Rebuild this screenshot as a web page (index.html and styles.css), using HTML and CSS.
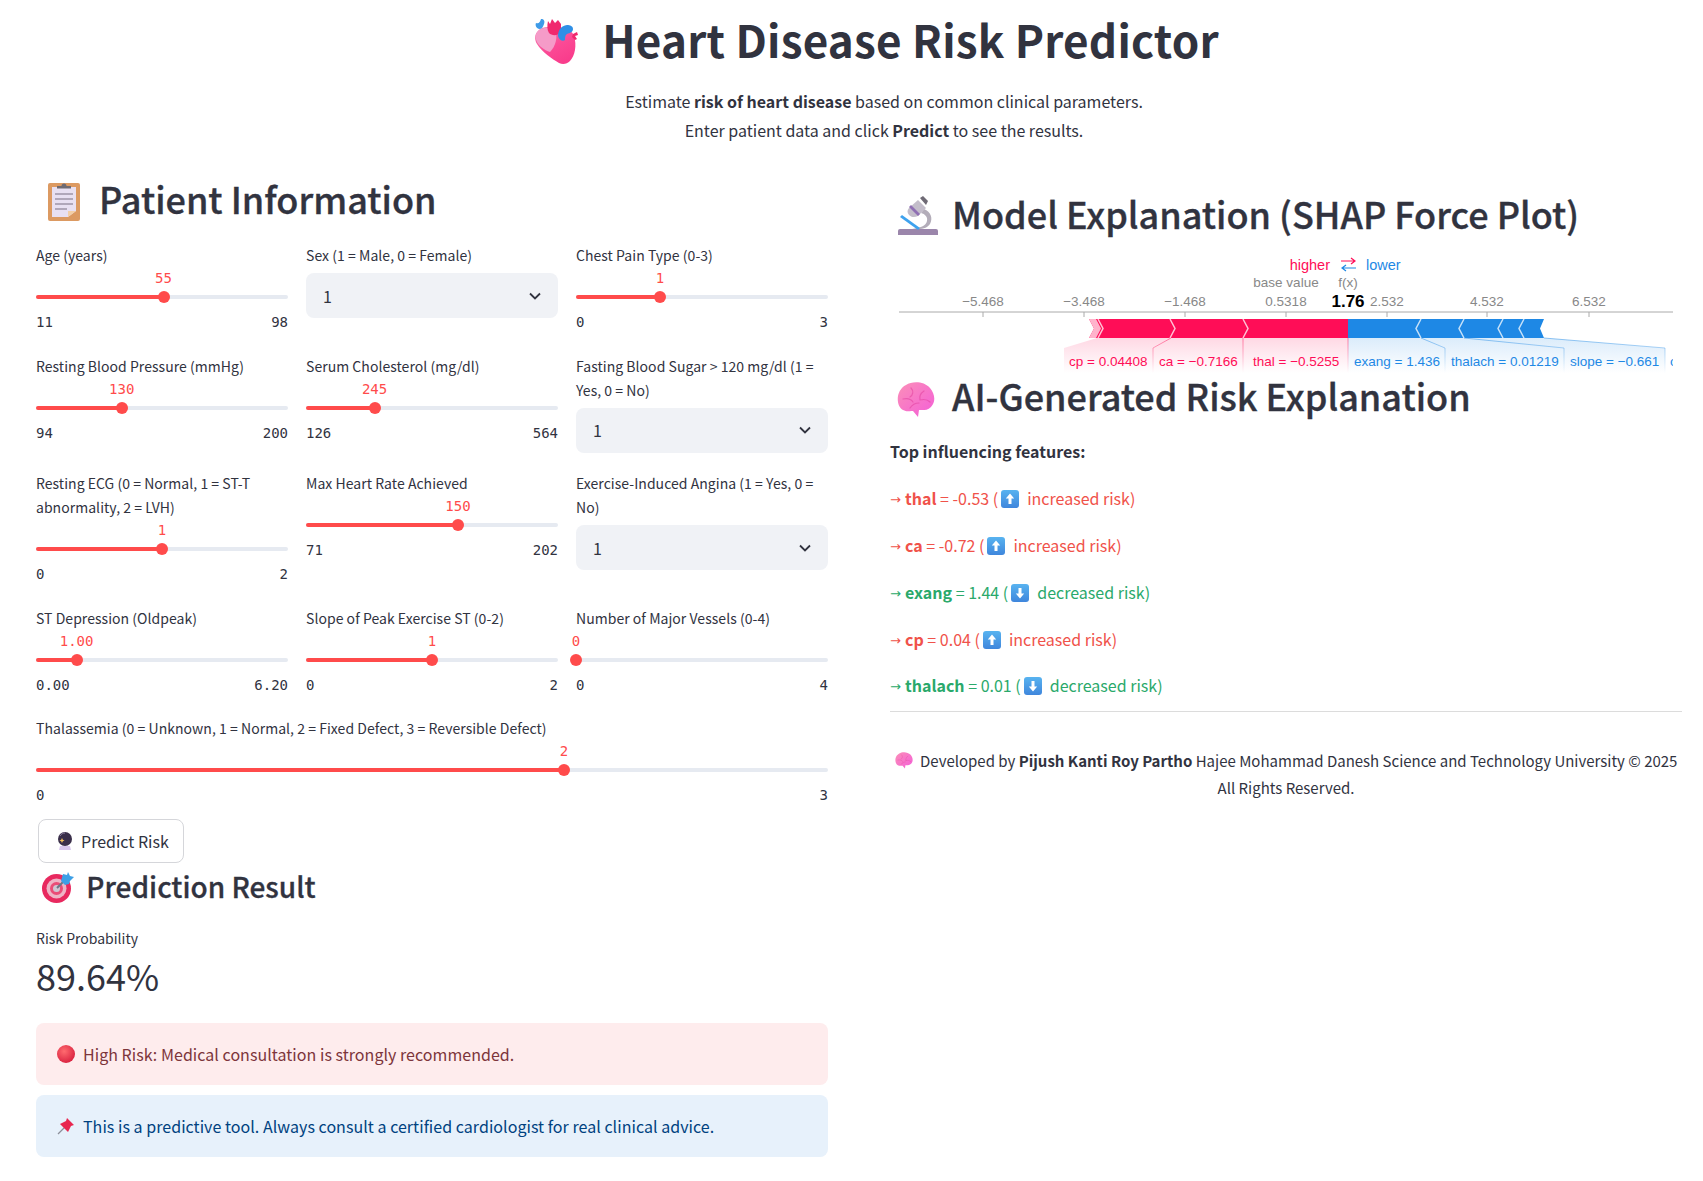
FILE: index.html
```html
<!DOCTYPE html>
<html lang="en">
<head>
    <meta charset="UTF-8">
    <meta name="viewport" content="width=device-width, initial-scale=1.0">
    <title>Heart Disease Risk Predictor</title>
    <link rel="stylesheet" href="styles.css">
</head>
<body>
    <!-- Emoji drawings, reused below -->
    <svg class="defs" width="0" height="0" aria-hidden="true">
        <defs>
            <linearGradient id="heartFill" x1="0" y1="0" x2="0.6" y2="1"><stop offset="0" stop-color="#f27bb0"/><stop offset="0.6" stop-color="#fb4a95"/><stop offset="1" stop-color="#f93d8c"/></linearGradient>
            <linearGradient id="brainFill" x1="0" y1="0" x2="1" y2="1"><stop offset="0" stop-color="#fb8fb8"/><stop offset="1" stop-color="#f45ed8"/></linearGradient>
            <radialGradient id="redBall" cx="0.4" cy="0.35" r="0.7"><stop offset="0" stop-color="#ff6b6f"/><stop offset="1" stop-color="#d81f3e"/></radialGradient>
            <linearGradient id="keyFill" x1="0" y1="0" x2="0" y2="1"><stop offset="0" stop-color="#58b3f0"/><stop offset="1" stop-color="#3f86dc"/></linearGradient>
            <linearGradient id="pinkFade" gradientUnits="userSpaceOnUse" x1="0" y1="338" x2="0" y2="373"><stop offset="0" stop-color="#ff0d57" stop-opacity="0.16"/><stop offset="1" stop-color="#ff0d57" stop-opacity="0"/></linearGradient>
            <linearGradient id="blueFade" gradientUnits="userSpaceOnUse" x1="0" y1="338" x2="0" y2="373"><stop offset="0" stop-color="#1e88e5" stop-opacity="0.16"/><stop offset="1" stop-color="#1e88e5" stop-opacity="0"/></linearGradient>
            <linearGradient id="pinkLine" gradientUnits="userSpaceOnUse" x1="0" y1="338" x2="0" y2="373"><stop offset="0" stop-color="#ff0d57" stop-opacity="0.5"/><stop offset="1" stop-color="#ff0d57" stop-opacity="0"/></linearGradient>
            <linearGradient id="blueLine" gradientUnits="userSpaceOnUse" x1="0" y1="338" x2="0" y2="373"><stop offset="0" stop-color="#1e88e5" stop-opacity="0.5"/><stop offset="1" stop-color="#1e88e5" stop-opacity="0"/></linearGradient>
            <clipPath id="plotClip"><rect x="899" y="251" width="774" height="122"/></clipPath>
        </defs>
        <symbol id="iconBrain" viewBox="0 0 38 36">
            <path d="M9 3C15-1 27-1 33 6c5 6 6 14 1 19-3 3-6 3-9 3l-3 0-1 7-5-6c-5 0-6 1-10-1C2 26 0 20 1 14 2 9 5 5 9 3z" fill="url(#brainFill)"/>
            <path d="M14 6c3 3 2 7-1 9M27 9c-3 2-5 5-4 9M6 17c4-1 8 0 10 3M23 18c4-1 8 0 10 2M13 26c2-3 5-5 9-5" fill="none" stroke="#e2409f" stroke-opacity="0.55" stroke-width="1.2" stroke-linecap="round"/>
        </symbol>
        <symbol id="iconUp" viewBox="0 0 18 18">
            <rect width="18" height="18" rx="3" fill="url(#keyFill)"/>
            <path d="M9 3.5 4.8 8.5H7.5V14h3V8.5h2.7z" fill="#fff"/>
        </symbol>
        <symbol id="iconDown" viewBox="0 0 18 18">
            <rect width="18" height="18" rx="3" fill="url(#keyFill)"/>
            <path d="M9 14.5 4.8 9.5H7.5V4h3v5.5h2.7z" fill="#fff"/>
        </symbol>
    </svg>

    <header class="page-head">
        <h1>
            <svg class="icon-heart" viewBox="0 0 47 48">
                <path d="M6 14C10 9 20 9 28 13c6-2 12 0 14 6 3 9 1 20-4 25-3 3-7 4-11 2C20 42 10 35 5 27 2 22 3 17 6 14z" fill="url(#heartFill)"/>
                <path d="M6 14c4-4 12-4 17-1 3 6 1 16-5 22C12 33 7 29 5 25 3 21 3 17 6 14z" fill="#f59bc8"/>
                <path d="M16 4l2 3 2-5 3 4 3-3 3 4v8c-3 4-9 4-12 1-2-3-2-8-1-12z" fill="#f0296e"/>
                <path d="M4 6C7 7 8 5 9 2c3 0 4 2 3 5-1 3-2 5-5 5-3-1-4-4-3-6z" fill="#3e9be8"/>
                <path d="M26 19c0-6 3-10 9-11 3 0 6 1 6 4s-3 4-6 5c-2 1-2 4-2 6-2 2-6 0-7-4z" fill="#2f8fe6"/>
                <path d="M41 17l4-2 1 3-3 1 2 3-2 1-3-3z" fill="#f0296e"/>
            </svg>
            Heart Disease Risk Predictor
        </h1>
        <p>Estimate <strong>risk of heart disease</strong> based on common clinical parameters.</p>
        <p>Enter patient data and click <strong>Predict</strong> to see the results.</p>
    </header>

    <main class="columns">
        <section class="col-left">
            <h2>
                <svg class="icon-h2 icon-clip" viewBox="0 0 32 40">
                    <rect y="2" width="32" height="38" rx="2" fill="#dc9a62"/>
                    <path d="M4 6h24v24l-8 6H4z" fill="#e8e0f2"/>
                    <path d="M20 36l8-6h-8z" fill="#f3cfa6"/>
                    <path d="M7 13h18M7 18h18M7 23h18M7 28h12" stroke="#9d94a8" stroke-width="1.4"/>
                    <path d="M9 7V5h4.500a2.500 2.500 0 0 1 5 0H23v2.500H9z" fill="#6e6a72"/>
                </svg>
                Patient Information
            </h2>

            <div class="inputs">
                <div class="field">
                    <label>Age (years)</label>
                    <div class="slider" style="--p:50.6%"><span class="track"></span><span class="fill"></span><span class="thumb"></span><span class="value">55</span></div>
                    <div class="range"><span>11</span><span>98</span></div>
                </div>
                <div class="field">
                    <label>Sex (1 = Male, 0 = Female)</label>
                    <div class="select">1<svg viewBox="0 0 12 8"><path d="M1 1.500 6 6.500l5-5" fill="none" stroke="#31333f" stroke-width="1.800"/></svg></div>
                </div>
                <div class="field">
                    <label>Chest Pain Type (0-3)</label>
                    <div class="slider" style="--p:33.33%"><span class="track"></span><span class="fill"></span><span class="thumb"></span><span class="value">1</span></div>
                    <div class="range"><span>0</span><span>3</span></div>
                </div>

                <div class="field">
                    <label>Resting Blood Pressure (mmHg)</label>
                    <div class="slider" style="--p:34%"><span class="track"></span><span class="fill"></span><span class="thumb"></span><span class="value">130</span></div>
                    <div class="range"><span>94</span><span>200</span></div>
                </div>
                <div class="field">
                    <label>Serum Cholesterol (mg/dl)</label>
                    <div class="slider" style="--p:27.2%"><span class="track"></span><span class="fill"></span><span class="thumb"></span><span class="value">245</span></div>
                    <div class="range"><span>126</span><span>564</span></div>
                </div>
                <div class="field">
                    <label>Fasting Blood Sugar &gt; 120 mg/dl (1 = Yes, 0 = No)</label>
                    <div class="select">1<svg viewBox="0 0 12 8"><path d="M1 1.500 6 6.500l5-5" fill="none" stroke="#31333f" stroke-width="1.800"/></svg></div>
                </div>

                <div class="field">
                    <label>Resting ECG (0 = Normal, 1 = ST-T abnormality, 2 = LVH)</label>
                    <div class="slider" style="--p:50%"><span class="track"></span><span class="fill"></span><span class="thumb"></span><span class="value">1</span></div>
                    <div class="range"><span>0</span><span>2</span></div>
                </div>
                <div class="field">
                    <label>Max Heart Rate Achieved</label>
                    <div class="slider" style="--p:60.3%"><span class="track"></span><span class="fill"></span><span class="thumb"></span><span class="value">150</span></div>
                    <div class="range"><span>71</span><span>202</span></div>
                </div>
                <div class="field">
                    <label>Exercise-Induced Angina (1 = Yes, 0 = No)</label>
                    <div class="select">1<svg viewBox="0 0 12 8"><path d="M1 1.500 6 6.500l5-5" fill="none" stroke="#31333f" stroke-width="1.800"/></svg></div>
                </div>

                <div class="field">
                    <label>ST Depression (Oldpeak)</label>
                    <div class="slider" style="--p:16.1%"><span class="track"></span><span class="fill"></span><span class="thumb"></span><span class="value">1.00</span></div>
                    <div class="range"><span>0.00</span><span>6.20</span></div>
                </div>
                <div class="field">
                    <label>Slope of Peak Exercise ST (0-2)</label>
                    <div class="slider" style="--p:50%"><span class="track"></span><span class="fill"></span><span class="thumb"></span><span class="value">1</span></div>
                    <div class="range"><span>0</span><span>2</span></div>
                </div>
                <div class="field">
                    <label>Number of Major Vessels (0-4)</label>
                    <div class="slider" style="--p:0%"><span class="track"></span><span class="fill"></span><span class="thumb"></span><span class="value">0</span></div>
                    <div class="range"><span>0</span><span>4</span></div>
                </div>

                <div class="field field-wide">
                    <label>Thalassemia (0 = Unknown, 1 = Normal, 2 = Fixed Defect, 3 = Reversible Defect)</label>
                    <div class="slider" style="--p:66.67%"><span class="track"></span><span class="fill"></span><span class="thumb"></span><span class="value">2</span></div>
                    <div class="range"><span>0</span><span>3</span></div>
                </div>
            </div>

            <button class="predict">
                <svg class="icon-ball" viewBox="0 0 16 18">
                    <circle cx="8" cy="7" r="7" fill="#3a2f4a"/>
                    <path d="M3 4c1-2 3-3 5-3" stroke="#8d80a0" stroke-width="1" fill="none"/>
                    <path d="M5 6l.8 1.700L7.500 8.500l-1.700.8L5 11l-.8-1.700L2.500 8.500l1.700-.8z" fill="#f4c15d"/>
                    <path d="M3 14h10l1 4H2z" fill="#d9c8ee"/>
                </svg>
                Predict Risk
            </button>

            <h3>
                <svg class="icon-target" viewBox="0 0 32 31">
                    <circle cx="14.500" cy="16.500" r="14.500" fill="#e8295f"/>
                    <circle cx="14.500" cy="16.500" r="10" fill="#eeb4c6"/>
                    <circle cx="14.500" cy="16.500" r="6.500" fill="#ea4c77"/>
                    <circle cx="14.500" cy="16.500" r="3.500" fill="#cfc6d2"/>
                    <path d="M15 16 24 7" stroke="#6b7787" stroke-width="2"/>
                    <path d="M19 9l2-7 4 1 1-3 2 4 4 1-4 4-1 3-4 1z" fill="#3d9fe6"/>
                </svg>
                Prediction Result
            </h3>

            <div class="metric-label">Risk Probability</div>
            <div class="metric-value">89.64%</div>

            <div class="alert alert-error">
                <svg class="icon-alert" viewBox="0 0 18 18"><circle cx="9" cy="9" r="9" fill="url(#redBall)"/></svg>
                High Risk: Medical consultation is strongly recommended.
            </div>
            <div class="alert alert-info">
                <svg class="icon-alert" viewBox="0 0 18 18">
                    <path d="M8 10 1 17" stroke="#8c8f99" stroke-width="1.300"/>
                    <path d="M10 1l7 7-3 1-2 4-1 2-8-8 2-1 4-2z" fill="#e8264f"/>
                </svg>
                This is a predictive tool. Always consult a certified cardiologist for real clinical advice.
            </div>
        </section>

        <section class="col-right">
            <h2>
                <svg class="icon-h2 icon-scope" viewBox="0 0 40 40">
                    <path d="M0 35a2 2 0 0 1 2-2h36a2 2 0 0 1 2 2v4H0z" fill="#9b86ab"/>
                    <path d="M26 13c7 3 9 9 6 15-2 3-6 5-12 5h-6c8-1 14-3 15-8 1-4-2-7-6-8z" fill="#b3adb9"/>
                    <path d="M11 12 20 4l8 8-8 8c-4 2-7 1-9-1-2-2-2-5 0-7z" fill="#c3bdca"/>
                    <path d="M13 9l9 9-2 2-9-9z" fill="#8f6fb3"/>
                    <path d="M22 2l3-2 5 5-2 4z" fill="#6f6a75"/>
                    <path d="M4 19l18 13-2 2L2 21z" fill="#3ea2ee"/>
                </svg>
                Model Explanation (SHAP Force Plot)
            </h2>

            <svg class="force-plot" viewBox="890 251 792 122">
                <g class="plot-top">
                    <text x="1330" y="270" text-anchor="end" fill="#ff0d57" class="plot-key">higher</text>
                    <text x="1366" y="270" fill="#1e88e5" class="plot-key">lower</text>
                    <path d="M1341 261h14m-4-3 4 3-4 3" fill="none" stroke="#ff0d57" stroke-width="1.200"/>
                    <path d="M1356 268h-14m4-3-4 3 4 3" fill="none" stroke="#1e88e5" stroke-width="1.200"/>
                    <text x="1286" y="287" text-anchor="middle" class="plot-tick">base value</text>
                    <text x="1348" y="287" text-anchor="middle" class="plot-tick">f(x)</text>
                </g>
                <g class="plot-axis">
                    <text x="983" y="306" text-anchor="middle" class="plot-tick">−5.468</text>
                    <text x="1084" y="306" text-anchor="middle" class="plot-tick">−3.468</text>
                    <text x="1185" y="306" text-anchor="middle" class="plot-tick">−1.468</text>
                    <text x="1286" y="306" text-anchor="middle" class="plot-tick">0.5318</text>
                    <text x="1387" y="306" text-anchor="middle" class="plot-tick">2.532</text>
                    <text x="1487" y="306" text-anchor="middle" class="plot-tick">4.532</text>
                    <text x="1589" y="306" text-anchor="middle" class="plot-tick">6.532</text>
                    <text x="1348" y="307" text-anchor="middle" class="plot-fx">1.76</text>
                    <path d="M899 312H1673M983 312v5M1084 312v5M1185 312v5M1286 312v5M1387 312v5M1487 312v5M1589 312v5" stroke="#aaa" fill="none"/>
                </g>

                <g clip-path="url(#plotClip)">
                    <!-- fades under the bar -->
                    <path d="M1097 338 1064 348V373H1153V348L1171 338z" fill="url(#pinkFade)"/>
                    <path d="M1171 338 1153 348V373H1243V338z" fill="url(#pinkFade)"/>
                    <path d="M1243 338V373H1348V338z" fill="url(#pinkFade)"/>
                    <path d="M1348 338V373H1445V348L1421 338z" fill="url(#blueFade)"/>
                    <path d="M1421 338 1445 348V373H1564V348L1464 338z" fill="url(#blueFade)"/>
                    <path d="M1464 338 1564 348V373H1665V348L1544 338z" fill="url(#blueFade)"/>
                    <path d="M1171 338 1153 348V373M1243 338V373M1348 338V373" fill="none" stroke="url(#pinkLine)"/>
                    <path d="M1421 338 1445 348V373M1464 338 1564 348V373M1544 338 1665 348V373" fill="none" stroke="url(#blueLine)"/>

                    <path d="M1089 319H1348V338H1089L1094 328.500z" fill="#ff0d57"/>
                    <path d="M1089 319H1096L1101 328.500 1096 338H1089L1094 328.500z" fill="#ffb3cb"/>
                    <path d="M1348 319H1544L1540 328.500 1544 338H1348z" fill="#1e88e5"/>
                    <path d="M1098 319 1103 328.500 1098 338M1170 319 1175 328.500 1170 338M1243 319 1248 328.500 1243 338M1421 319 1416 328.500 1421 338M1464 319 1459 328.500 1464 338M1503 319 1498 328.500 1503 338M1524 319 1519 328.500 1524 338" fill="none" stroke="#fff" stroke-opacity="0.75" stroke-width="1.500"/>

                    <text x="1069" y="366" fill="#ff0d57" class="plot-label">cp = 0.04408</text>
                    <text x="1159" y="366" fill="#ff0d57" class="plot-label">ca = −0.7166</text>
                    <text x="1253" y="366" fill="#ff0d57" class="plot-label">thal = −0.5255</text>
                    <text x="1354" y="366" fill="#1e88e5" class="plot-label">exang = 1.436</text>
                    <text x="1451" y="366" fill="#1e88e5" class="plot-label">thalach = 0.01219</text>
                    <text x="1570" y="366" fill="#1e88e5" class="plot-label">slope = −0.661</text>
                    <text x="1670" y="366" fill="#1e88e5" class="plot-label">oldpeak</text>
                </g>
            </svg>

            <h2>
                <svg class="icon-h2 icon-brain"><use href="#iconBrain"/></svg>
                AI-Generated Risk Explanation
            </h2>

            <p class="top-title"><strong>Top influencing features:</strong></p>
            <p class="feature up"><span class="arrow">→</span><strong>thal</strong> = -0.53 (<svg class="icon-key"><use href="#iconUp"/></svg>increased risk)</p>
            <p class="feature up"><span class="arrow">→</span><strong>ca</strong> = -0.72 (<svg class="icon-key"><use href="#iconUp"/></svg>increased risk)</p>
            <p class="feature down"><span class="arrow">→</span><strong>exang</strong> = 1.44 (<svg class="icon-key"><use href="#iconDown"/></svg>decreased risk)</p>
            <p class="feature up"><span class="arrow">→</span><strong>cp</strong> = 0.04 (<svg class="icon-key"><use href="#iconUp"/></svg>increased risk)</p>
            <p class="feature down feature-last"><span class="arrow">→</span><strong>thalach</strong> = 0.01 (<svg class="icon-key"><use href="#iconDown"/></svg>decreased risk)</p>

            <hr>

            <footer class="credit">
                <svg class="icon-mini"><use href="#iconBrain"/></svg>
                Developed by <strong>Pijush Kanti Roy Partho</strong> Hajee Mohammad Danesh Science and Technology University © 2025<br>
                All Rights Reserved.
            </footer>
        </section>
    </main>
</body>
</html>
```

FILE: styles.css
```css
/* Page */
html, body {
    margin: 0;
    height: 100%;
    background: white;
    overflow: hidden;
}

body {
    font-family: "Noto Sans CJK SC", "Noto Sans", sans-serif;
    font-size: 16px;
    color: #31333f;
}

.defs {
    position: absolute;
}

strong {
    font-weight: 700;
}

p {
    margin: 0;
}

/* Header */
.page-head {
    padding: 9px 0 0 65px;
    text-align: center;
}

.page-head h1 {
    margin: 0 0 18px;
    padding-right: 17px;
    font-size: 44px;
    line-height: 60px;
    font-weight: 700;
    letter-spacing: 0.2px;
}

.page-head p {
    line-height: 29px;
}

.icon-heart {
    width: 47px;
    height: 48px;
    margin-right: 13px;
    vertical-align: -7px;
}

/* Two columns */
.columns {
    display: grid;
    grid-template-columns: 792px 792px;
    column-gap: 62px;
    padding: 31px 0 0 36px;
}

.col-right {
    padding-top: 15px;
}

h2 {
    height: 48px;
    margin: 0;
    font-size: 36px;
    line-height: 44px;
    font-weight: 500;
    -webkit-text-stroke: 0.35px #31333f;
}

.col-left h2 {
    margin-bottom: 19px;
}

h3 {
    height: 48px;
    margin: 0 0 15px;
    font-size: 28px;
    line-height: 46px;
    font-weight: 500;
    -webkit-text-stroke: 0.3px #31333f;
}

.icon-h2 {
    vertical-align: -7px;
    margin-right: 7px;
}

.icon-clip {
    width: 32px;
    height: 40px;
    margin-left: 12px;
    margin-right: 11px;
}

.icon-scope {
    width: 40px;
    height: 40px;
    margin-left: 8px;
    margin-right: 6px;
}

.icon-brain {
    width: 38px;
    height: 36px;
    margin-left: 7px;
    margin-right: 9px;
}

.icon-target {
    width: 32px;
    height: 31px;
    margin-left: 6px;
    margin-right: 6px;
    vertical-align: -5px;
}

/* Inputs grid */
.inputs {
    display: grid;
    grid-template-columns: repeat(3, 252px);
    column-gap: 18px;
    row-gap: 18.5px;
    align-items: start;
}

.field-wide {
    grid-column: 1 / -1;
}

.field label {
    display: block;
    font-size: 14px;
    line-height: 24px;
    letter-spacing: 0.04px;
}

.slider {
    position: relative;
    height: 41px;
}

.track,
.fill {
    position: absolute;
    left: 0;
    top: 28px;
    height: 4px;
    border-radius: 2px;
}

.track {
    width: 100%;
    background: #e6eaf1;
}

.fill {
    width: var(--p);
    background: #ff4b4b;
}

.thumb {
    position: absolute;
    left: var(--p);
    top: 24px;
    width: 12px;
    height: 12px;
    margin-left: -6px;
    border-radius: 50%;
    background: #ff4b4b;
}

.value {
    position: absolute;
    left: var(--p);
    top: 1px;
    transform: translateX(-50%);
    font-family: "DejaVu Sans Mono", monospace;
    font-size: 14px;
    line-height: 20px;
    color: #ff4b4b;
}

.range {
    display: flex;
    justify-content: space-between;
    height: 27px;
    font-family: "DejaVu Sans Mono", monospace;
    font-size: 14px;
    line-height: 29px;
}

.select {
    display: flex;
    align-items: center;
    justify-content: space-between;
    height: 45px;
    margin-top: 6px;
    padding: 0 17px;
    border-radius: 8px;
    background: #f0f2f6;
}

.select svg {
    width: 12px;
    height: 8px;
}

/* Button */
.predict {
    display: flex;
    align-items: center;
    gap: 8px;
    width: 146px;
    height: 44px;
    margin: 11px 0 0 2px;
    padding: 0 0 0 18px;
    border: 1px solid #d5d6da;
    border-radius: 8px;
    background: white;
    color: #31333f;
    font-family: inherit;
    font-size: 16px;
}

.icon-ball {
    width: 16px;
    height: 18px;
}

/* Result */
.metric-label {
    font-size: 14px;
    line-height: 24px;
}

.metric-value {
    font-size: 36px;
    line-height: 50px;
}

.alert {
    display: flex;
    align-items: center;
    gap: 8px;
    height: 62px;
    padding-left: 21px;
    border-radius: 8px;
    letter-spacing: 0.04px;
}

.alert-error {
    margin-top: 23px;
    background: #feeced;
    color: #7d353b;
}

.alert-info {
    margin-top: 10px;
    background: #e7f1fb;
    color: #004280;
}

.icon-alert {
    width: 18px;
    height: 18px;
}

/* Force plot */
.force-plot {
    display: block;
    width: 792px;
    height: 122px;
    margin-top: 12px;
    font-family: "Liberation Sans", Arial, sans-serif;
}

.plot-key {
    font-size: 14.500px;
}

.plot-tick {
    font-size: 13.500px;
    fill: #888;
}

.plot-fx {
    font-size: 17px;
    font-weight: 700;
    fill: #000;
}

.plot-label {
    font-size: 13.500px;
}

/* AI explanation */
.top-title {
    margin-top: 18px;
    line-height: 24px;
}

.feature {
    height: 24px;
    margin-top: 23px;
    line-height: 24px;
}

.feature-last {
    margin-top: 22px;
}

.feature.up {
    color: #f0524a;
}

.feature.down {
    color: #2aa96b;
}

.arrow {
    display: inline-block;
    width: 15px;
    font-family: "DejaVu Sans", sans-serif;
    font-size: 13px;
    line-height: 1;
    vertical-align: 1px;
}

.icon-key {
    width: 18px;
    height: 18px;
    margin: 0 8px 0 3px;
    vertical-align: -3px;
}

hr {
    height: 1px;
    margin: 14px 0 0;
    border: none;
    background: #dcdcdc;
}

.credit {
    margin-top: 35px;
    font-size: 15px;
    line-height: 27px;
    text-align: center;
}

.icon-mini {
    width: 18px;
    height: 17px;
    margin-right: 4px;
    vertical-align: -2px;
}
```
